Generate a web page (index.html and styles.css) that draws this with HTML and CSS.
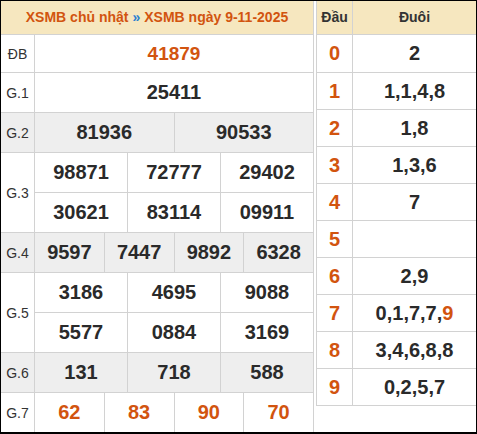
FILE: index.html
```html
<!DOCTYPE html>
<html lang="vi">
<head>
<meta charset="utf-8">
<title>XSMB ngày 9-11-2025</title>
<link rel="stylesheet" href="styles.css">
</head>
<body>
<div class="frame">
  <div class="results">
    <div class="title">XSMB chủ nhật <span class="sep">»</span> XSMB ngày 9-11-2025</div>
    <div class="row row-db">
      <div class="lbl">ĐB</div>
      <div class="cells"><div class="c hot db">41879</div></div>
    </div>
    <div class="row">
      <div class="lbl">G.1</div>
      <div class="cells"><div class="c">25411</div></div>
    </div>
    <div class="row alt">
      <div class="lbl">G.2</div>
      <div class="cells"><div class="c">81936</div><div class="c">90533</div></div>
    </div>
    <div class="row">
      <div class="lbl">G.3</div>
      <div class="subs">
        <div class="cells"><div class="c">98871</div><div class="c">72777</div><div class="c">29402</div></div>
        <div class="cells"><div class="c">30621</div><div class="c">83114</div><div class="c">09911</div></div>
      </div>
    </div>
    <div class="row alt">
      <div class="lbl">G.4</div>
      <div class="cells"><div class="c">9597</div><div class="c">7447</div><div class="c">9892</div><div class="c">6328</div></div>
    </div>
    <div class="row">
      <div class="lbl">G.5</div>
      <div class="subs">
        <div class="cells"><div class="c">3186</div><div class="c">4695</div><div class="c">9088</div></div>
        <div class="cells"><div class="c">5577</div><div class="c">0884</div><div class="c">3169</div></div>
      </div>
    </div>
    <div class="row alt">
      <div class="lbl">G.6</div>
      <div class="cells"><div class="c">131</div><div class="c">718</div><div class="c">588</div></div>
    </div>
    <div class="row">
      <div class="lbl">G.7</div>
      <div class="cells"><div class="c hot">62</div><div class="c hot">83</div><div class="c hot">90</div><div class="c hot">70</div></div>
    </div>
  </div>

  <div class="loto">
    <div class="lrow lhead"><div class="h">Đầu</div><div class="t">Đuôi</div></div>
    <div class="lrow first"><div class="h">0</div><div class="t">2</div></div>
    <div class="lrow"><div class="h">1</div><div class="t">1,1,4,8</div></div>
    <div class="lrow"><div class="h">2</div><div class="t">1,8</div></div>
    <div class="lrow"><div class="h">3</div><div class="t">1,3,6</div></div>
    <div class="lrow"><div class="h">4</div><div class="t">7</div></div>
    <div class="lrow"><div class="h">5</div><div class="t"></div></div>
    <div class="lrow"><div class="h">6</div><div class="t">2,9</div></div>
    <div class="lrow"><div class="h">7</div><div class="t">0,1,7,7,<span class="hot">9</span></div></div>
    <div class="lrow"><div class="h">8</div><div class="t">3,4,6,8,8</div></div>
    <div class="lrow"><div class="h">9</div><div class="t">0,2,5,7</div></div>
  </div>
</div>
</body>
</html>
```

FILE: styles.css
```css
* { box-sizing: border-box; }

html, body {
  margin: 0;
  padding: 0;
  background: #fff;
}

body {
  font-family: "Liberation Sans", Arial, sans-serif;
  color: #2a2a2a;
}

.frame {
  width: 477px;
  height: 434px;
  border: 1px solid #000;
  border-bottom-width: 2px;
  display: flex;
  gap: 2px;
  overflow: hidden;
  background: #fff;
}

.results {
  width: 313px;
  flex: none;
  border-right: 1px solid #d2d2d2;
  display: flex;
  flex-direction: column;
}

.title {
  height: 34px;
  flex: none;
  background: #f6e7bf;
  border-bottom: 1px solid #d2d2d2;
  display: flex;
  align-items: center;
  justify-content: center;
  font-size: 14px;
  font-weight: bold;
  color: #d2540f;
  padding-bottom: 1px;
}

.title .sep {
  color: #2a7fd0;
  margin: 0 4px;
}

.row {
  display: flex;
  flex: none;
}

.row.alt { background: #eeeeee; }

.lbl {
  width: 34px;
  flex: none;
  border-right: 1px solid #d2d2d2;
  border-bottom: 1px solid #d2d2d2;
  display: flex;
  align-items: center;
  justify-content: center;
  font-size: 14px;
  color: #333;
}

.subs {
  flex: 1;
  display: flex;
  flex-direction: column;
}

.cells {
  flex: 1;
  display: flex;
  height: 40px;
  border-bottom: 1px solid #d2d2d2;
}

.subs .cells { flex: none; }

.row-db .cells { height: 38px; }

.c {
  flex: 1 1 0;
  display: flex;
  align-items: center;
  justify-content: center;
  font-size: 20px;
  font-weight: bold;
  color: #2a2a2a;
}

.c + .c { border-left: 1px solid #d2d2d2; }

.c.db { font-size: 19px; }

.hot, .c.hot { color: #d2540f; }

.loto {
  flex: 1;
  border-left: 1px solid #d2d2d2;
  align-self: flex-start;
  display: flex;
  flex-direction: column;
}

.lrow {
  display: flex;
  height: 37px;
  border-bottom: 1px solid #d2d2d2;
}

.lrow.first { height: 38px; }

.lrow.lhead {
  height: 34px;
  background: #f6e7bf;
}

.h {
  width: 36px;
  flex: none;
  border-right: 1px solid #d2d2d2;
  display: flex;
  align-items: center;
  justify-content: center;
  font-size: 20px;
  font-weight: bold;
  color: #d2540f;
}

.t {
  flex: 1;
  display: flex;
  align-items: center;
  justify-content: center;
  font-size: 20px;
  font-weight: bold;
  color: #2a2a2a;
}

.lhead .h,
.lhead .t {
  font-size: 14px;
  color: #333;
  padding-bottom: 1px;
}
```
